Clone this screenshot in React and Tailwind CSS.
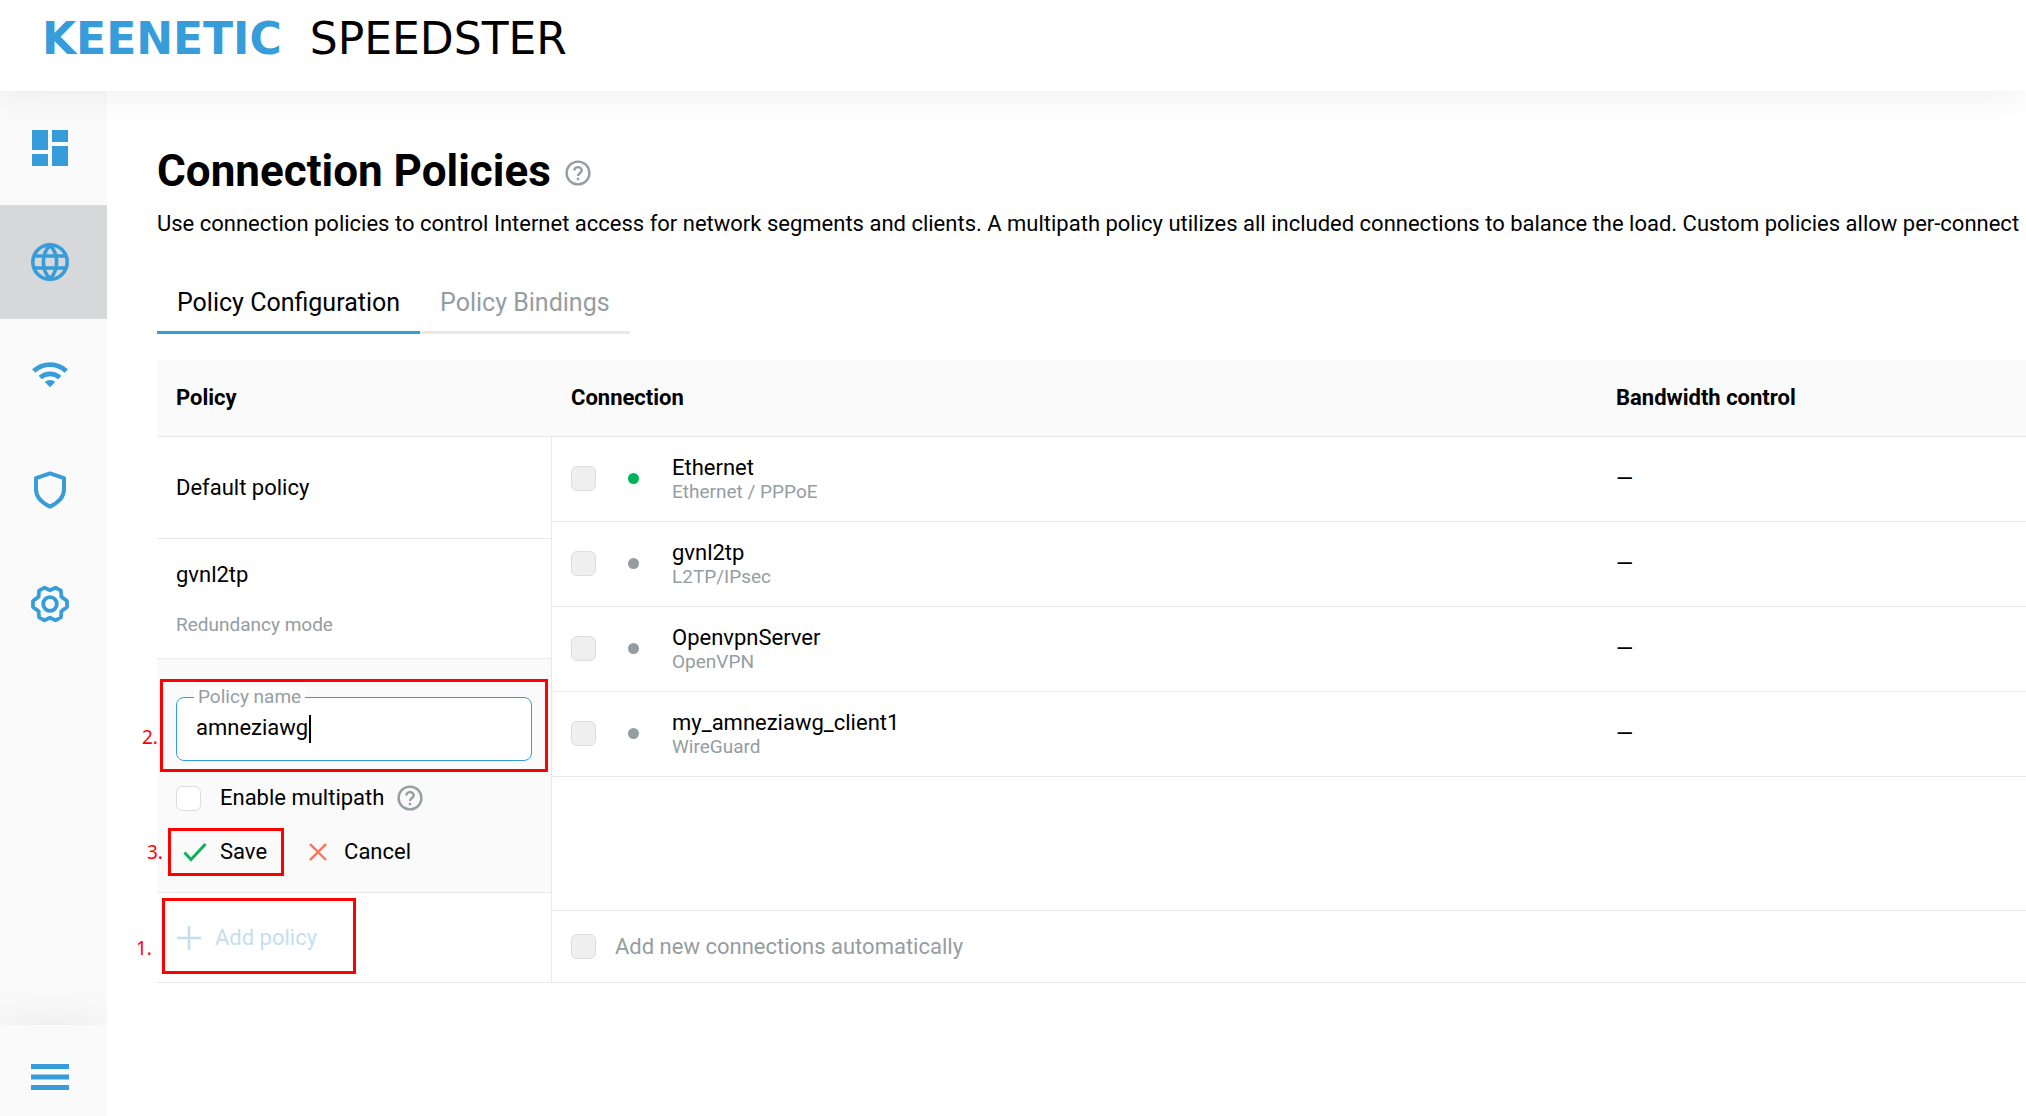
import React from "react";

const connections = [
  { name: "Ethernet", type: "Ethernet / PPPoE", online: true },
  { name: "gvnl2tp", type: "L2TP/IPsec", online: false },
  { name: "OpenvpnServer", type: "OpenVPN", online: false },
  { name: "my_amneziawg_client1", type: "WireGuard", online: false },
];

function DashboardIcon() {
  return (
    <svg viewBox="0 0 40 40" className="size-10" fill="currentColor" aria-hidden="true">
      <path d="M2 2h16v20H2zM22 2h16v12H22zM22 18h16v20H22zM2 26h16v12H2z" />
    </svg>
  );
}

function GlobeIcon() {
  return (
    <svg viewBox="0 0 40 40" className="size-10" fill="none" stroke="currentColor" strokeWidth="3.6" aria-hidden="true">
      <circle cx="20" cy="20" r="17.2" />
      <path d="M20 3c-4.400 4.600-6.600 10.500-6.600 17s2.200 12.400 6.600 17c4.400-4.600 6.600-10.500 6.600-17S24.400 7.600 20 3z" />
      <path d="M4.500 14h31M4.500 26h31" strokeWidth="3.400" />
    </svg>
  );
}

function WifiIcon() {
  return (
    <svg viewBox="0 0 40 40" className="size-10" fill="none" stroke="currentColor" strokeWidth="4.800" aria-hidden="true">
      <path d="M3.700 15c9.300-8.600 23.300-8.600 32.600 0" />
      <path d="M10.200 21.500c5.800-4.900 13.800-4.900 19.600 0" />
      <path d="M14.800 26.100c3-2.700 7.400-2.700 10.400 0L20 31.300z" fill="currentColor" stroke="none" />
    </svg>
  );
}

function ShieldIcon() {
  return (
    <svg viewBox="0 0 40 40" className="size-10" fill="none" stroke="currentColor" strokeWidth="4" strokeLinejoin="round" aria-hidden="true">
      <path d="M20 3.400L34 8.200V19.500C34 27 27.500 33 20 36.600C12.500 33 6 27 6 19.500V8.200z" />
    </svg>
  );
}

function GearIcon() {
  return (
    <svg viewBox="0 0 40 40" className="size-10" fill="none" stroke="currentColor" strokeWidth="3.800" strokeLinejoin="round" aria-hidden="true">
      <circle cx="20" cy="20" r="6.800" />
      <path d="M20 6.300L25.500 3.700L30.900 6.700L31.400 12.800L37 17V23L31.400 27.200L30.900 33.300L25.500 36.300L20 33.700L14.500 36.300L9.100 33.300L8.600 27.200L3 23V17L8.600 12.800L9.100 6.700L14.500 3.700z" />
    </svg>
  );
}

function MenuIcon() {
  return (
    <svg viewBox="0 0 40 40" className="size-10" fill="currentColor" aria-hidden="true">
      <path d="M1 7h38v5H1zM1 17.500h38v5H1zM1 28h38v5H1z" />
    </svg>
  );
}

function HelpButton({ label }) {
  return (
    <button type="button" aria-label={label} className="text-[#959da1]">
      <svg viewBox="0 0 26 26" className="size-[26px]" fill="none" stroke="currentColor" strokeWidth="2.400" aria-hidden="true">
        <circle cx="13" cy="13" r="11.400" />
        <path d="M9.300 10.600c0-2 1.600-3.500 3.700-3.500s3.700 1.500 3.700 3.400c0 2.500-3.700 2.700-3.700 5.600" />
        <path d="M13 17.800v2.500" />
      </svg>
    </button>
  );
}

const boxBase =
  "size-[25px] shrink-0 appearance-none rounded-md border border-[#dcdddd] bg-white disabled:bg-[#efefef] checked:bg-[#379cda]";

const navItems = [
  { label: "Dashboard", Icon: DashboardIcon },
  { label: "Internet", Icon: GlobeIcon, active: true },
  { label: "Networks", Icon: WifiIcon },
  { label: "Security", Icon: ShieldIcon },
  { label: "Management", Icon: GearIcon },
];

function Sidebar() {
  return (
    <nav className="flex w-[107px] shrink-0 flex-col bg-[#fafafa] text-[#379cda]">
      {navItems.map(({ label, Icon, active }) => (
        <a
          key={label}
          href="#"
          aria-label={label}
          className={
            active
              ? "flex h-[114px] items-center bg-[#d7d8da] pl-[30px]"
              : "flex h-[114px] items-center pl-[30px]"
          }
        >
          <Icon />
        </a>
      ))}
      <div className="mt-auto bg-[#fafafa] shadow-[0_0_50px_rgba(0,0,0,0.08)] [clip-path:inset(-60px_0_0_0)]">
        <button type="button" aria-label="Menu" className="flex h-[91px] w-full items-center pt-3 pl-[30px]">
          <MenuIcon />
        </button>
      </div>
    </nav>
  );
}

function PolicyColumn() {
  return (
    <section className="w-[395px] shrink-0">
      <h2 className="flex h-[77px] items-center border-b border-[#e9e9ea] bg-[#fafafa] pl-[19px] font-bold">Policy</h2>
      <div className="border-r border-[#e9e9ea]">
        <button type="button" className="flex h-[102px] w-full items-center border-b border-[#e9e9ea] pl-[19px]">
          Default policy
        </button>
        <button type="button" className="flex h-[120px] w-full flex-col items-start justify-center gap-6 border-b border-[#e9e9ea] pl-[19px] text-left">
          <span className="leading-7">gvnl2tp</span>
          <span className="text-[19px] leading-6 text-[#959da1]">Redundancy mode</span>
        </button>

        <form className="border-b border-[#e9e9ea] bg-[#fafafa] px-[19px] pt-[38px] pb-6" onSubmit={(e) => e.preventDefault()}>
          <div className="relative">
            <input
              id="policy-name"
              type="text"
              defaultValue="amneziawg"
              className="h-16 w-full rounded-lg border border-[#379cda] bg-white px-[19px] pb-1 outline-none"
            />
            <label htmlFor="policy-name" className="absolute -top-3 left-[18px] rounded-sm bg-white px-1 text-[19px] leading-6 text-[#959da1]">
              Policy name
            </label>
            <span className="absolute top-[18px] left-[133px] h-7 w-0.5 bg-black" aria-hidden="true" />
            <div className="pointer-events-none absolute -inset-x-4 -top-[18px] -bottom-[11px] border-3 border-[#ff0000]" />
            <Step className="top-7 -left-[34px]">2.</Step>
          </div>
          <div className="mt-[21px] flex h-[32px] items-center">
            <label className="flex items-center gap-[19px]">
              <input type="checkbox" className={boxBase} />
              Enable multipath
            </label>
            <span className="ml-[13px] flex">
              <HelpButton label="About multipath" />
            </span>
          </div>
          <div className="mt-[22px] flex h-[32px] items-center gap-[41px]">
            <button type="submit" className="relative flex items-center gap-[13px] pl-[7px]">
              <svg viewBox="0 0 24 24" className="size-6 text-[#0cb35b]" fill="none" stroke="currentColor" strokeWidth="3" aria-hidden="true">
                <path d="M1.500 12.500l6.500 7L22.500 4" />
              </svg>
              Save
              <span className="pointer-events-none absolute -inset-y-2 -right-[17px] -left-2 border-3 border-[#ff0000]" />
              <Step className="top-1 -left-[29px]">3.</Step>
            </button>
            <button type="button" className="flex items-center gap-4">
              <svg viewBox="0 0 20 20" className="size-5 text-[#ff6f55]" fill="none" stroke="currentColor" strokeWidth="2.400" aria-hidden="true">
                <path d="M2 2l16 16M18 2L2 18" />
              </svg>
              Cancel
            </button>
          </div>
        </form>

        <div className="flex h-[90px] items-center border-b border-[#e9e9ea] pl-[19px]">
          <button type="button" disabled className="relative flex items-center gap-[13px] text-[#c3dfef]">
            <svg viewBox="0 0 26 26" className="size-[26px]" fill="none" stroke="currentColor" strokeWidth="2.600" aria-hidden="true">
              <path d="M13 1v24M1 13h24" />
            </svg>
            Add policy
            <span className="pointer-events-none absolute -top-6 -right-[39px] -bottom-5 -left-[14px] border-3 border-[#ff0000]" />
            <Step className="top-3.5 -left-10">1.</Step>
          </button>
        </div>
      </div>
    </section>
  );
}

function Step({ className, children }) {
  return (
    <span className={"absolute font-['Noto_Sans',sans-serif] text-[19px] leading-6 text-[#ff0000] " + className}>
      {children}
    </span>
  );
}

function ConnectionColumn() {
  return (
    <section className="flex min-w-0 flex-1 flex-col">
      <table className="w-full table-fixed text-left">
        <colgroup>
          <col className="w-[120px]" />
          <col />
          <col className="w-[429px]" />
        </colgroup>
        <thead>
          <tr className="h-[76px] border-b border-[#e9e9ea] bg-[#fafafa]">
            <th colSpan={2} className="pl-[19px] font-bold">Connection</th>
            <th className="pl-[19px] font-bold">Bandwidth control</th>
          </tr>
        </thead>
        <tbody>
          {connections.map((c) => (
            <tr key={c.name} className="h-[85px] border-b border-[#e9e9ea]">
              <td className="pl-[19px]">
                <div className="flex items-center gap-8">
                  <input type="checkbox" disabled aria-label={c.name} className={boxBase} />
                  <span
                    className={
                      c.online
                        ? "size-[11px] rounded-full bg-[#00b25b]"
                        : "size-[11px] rounded-full bg-[#959da1]"
                    }
                  />
                </div>
              </td>
              <td className="pt-0.5">
                <div className="leading-6">{c.name}</div>
                <div className="text-[19px] leading-6 text-[#959da1]">{c.type}</div>
              </td>
              <td className="pl-[19px]">—</td>
            </tr>
          ))}
        </tbody>
      </table>
      <div className="flex-1" />
      <label className="flex h-[73px] items-center gap-[19px] border-y border-[#e9e9ea] pl-[19px] text-[#959da1]">
        <input type="checkbox" disabled className={boxBase} />
        Add new connections automatically
      </label>
    </section>
  );
}

export default function App() {
  return (
    <div className="flex min-h-screen flex-col overflow-hidden bg-white font-[Roboto,sans-serif] text-[22px] leading-8 text-black">
      <header className="z-10 flex h-[91px] items-start bg-white pt-3.5 pl-[42px] shadow-[0_0_40px_rgba(0,0,0,0.08)]">
        <a href="#" className="flex items-center gap-7 font-['DejaVu_Sans',sans-serif] text-[44px] leading-[50px]">
          <span className="font-bold text-[#379cda]">KEENETIC</span>
          <span>SPEEDSTER</span>
        </a>
      </header>
      <div className="flex flex-1">
        <Sidebar />
        <main className="min-w-0 flex-1 pt-[52px] pl-[50px]">
          <div className="flex items-center gap-3.5">
            <h1 className="text-[44px] leading-[56px] font-bold">Connection Policies</h1>
            <span className="flex pt-1">
              <HelpButton label="About connection policies" />
            </span>
          </div>
          <p className="mt-[9px] whitespace-nowrap">
            Use connection policies to control Internet access for network segments and clients. A multipath policy utilizes all included connections to balance the load. Custom policies allow per-connect
          </p>
          <div role="tablist" className="mt-[35px] flex text-[25px]">
            <button type="button" role="tab" aria-selected="true" className="border-b-3 border-[#379cda] px-5 pt-3 pb-3">
              Policy Configuration
            </button>
            <button type="button" role="tab" aria-selected="false" className="border-b-3 border-[#e9e9ea] px-5 pt-3 pb-3 text-[#959da1]">
              Policy Bindings
            </button>
          </div>
          <div className="mt-[26px] flex">
            <PolicyColumn />
            <ConnectionColumn />
          </div>
        </main>
      </div>
    </div>
  );
}
